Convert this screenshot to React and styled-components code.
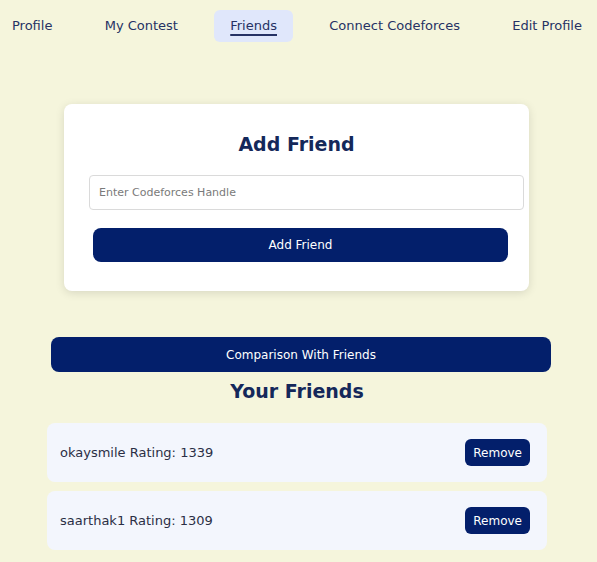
import styled, { createGlobalStyle } from 'styled-components';

const GlobalStyle = createGlobalStyle`
  body {
    margin: 0;
    background-color: #f5f5dc;
    font-family: "DejaVu Sans", "Open Sans", sans-serif;
  }
`;

const Page = styled.div`
  min-height: 100vh;
  background-color: #f5f5dc;
`;

const Nav = styled.nav`
  display: flex;
  justify-content: space-between;
  align-items: center;
  padding-top: 10px;
  margin: 0 -1px 0 -4px;
`;

const NavItem = styled.a`
  padding: 8px 16px;
  font-size: 13px;
  line-height: 16px;
  color: #263264;
  border-radius: 6px;
  background-color: ${props => (props.active ? '#e0e7fb' : 'transparent')};
  text-decoration: ${props => (props.active ? 'underline' : 'none')};
  text-underline-offset: 4px;
  text-decoration-thickness: 1.5px;
  cursor: pointer;
`;

const Main = styled.main`
  display: flex;
  flex-direction: column;
  align-items: center;
  padding-top: 62px;
`;

const Card = styled.div`
  width: 415px;
  padding: 25px 25px 29px;
  background-color: white;
  border-radius: 8px;
  box-shadow: 0 2px 10px rgba(0, 0, 0, 0.12);
  margin-right: 4px;
`;

const Titulo = styled.h2`
  margin: ${props => props.margin || '0 0 16px'};
  text-align: center;
  font-size: 19px;
  line-height: 30px;
  font-weight: 700;
  color: #14285a;
`;

const Input = styled.input`
  display: block;
  box-sizing: border-box;
  width: 435px;
  height: 35px;
  padding: 0 9px;
  border: 1px solid #dadada;
  border-radius: 4px;
  font-family: inherit;
  font-size: 11px;
  color: #333;

  &::placeholder {
    color: #7a7a7a;
  }
`;

const Botao = styled.button`
  display: block;
  width: 100%;
  height: ${props => props.height || '34px'};
  margin: ${props => props.margin || '0'};
  border: none;
  border-radius: 8px;
  background-color: #031f6b;
  color: white;
  font-family: inherit;
  font-size: 12px;
  cursor: pointer;
`;

const Lista = styled.section`
  width: 500px;
  margin: 46px 3px 0 0;
  display: flex;
  flex-direction: column;
`;

const FriendRow = styled.div`
  box-sizing: border-box;
  height: 59px;
  margin-bottom: 9px;
  display: flex;
  justify-content: space-between;
  align-items: center;
  padding: 0 17px 0 13px;
  background-color: #f3f6fd;
  border-radius: 8px;
  font-size: 13px;
  color: #2b2f45;
`;

const RemoveButton = styled.button`
  height: 27px;
  padding: 0 8px;
  border: none;
  border-radius: 6px;
  background-color: #031f6b;
  color: white;
  font-family: inherit;
  font-size: 12px;
  cursor: pointer;
`;

const amigos = [
  { handle: 'okaysmile', rating: 1339 },
  { handle: 'saarthak1', rating: 1309 },
];

function App() {
  return (
    <Page>
      <GlobalStyle />
      <Nav>
        <NavItem>Profile</NavItem>
        <NavItem>My Contest</NavItem>
        <NavItem active>Friends</NavItem>
        <NavItem>Connect Codeforces</NavItem>
        <NavItem>Edit Profile</NavItem>
      </Nav>
      <Main>
        <Card>
          <Titulo>Add Friend</Titulo>
          <Input placeholder="Enter Codeforces Handle" />
          <Botao margin="18px 0 0 4px">Add Friend</Botao>
        </Card>
        <Lista>
          <Botao height="35px" margin="0 0 0 4px">Comparison With Friends</Botao>
          <Titulo margin="4px 0 17px">Your Friends</Titulo>
          {amigos.map(a => (
            <FriendRow key={a.handle}>
              <span>{a.handle} Rating: {a.rating}</span>
              <RemoveButton>Remove</RemoveButton>
            </FriendRow>
          ))}
        </Lista>
      </Main>
    </Page>
  );
}

export default App;
